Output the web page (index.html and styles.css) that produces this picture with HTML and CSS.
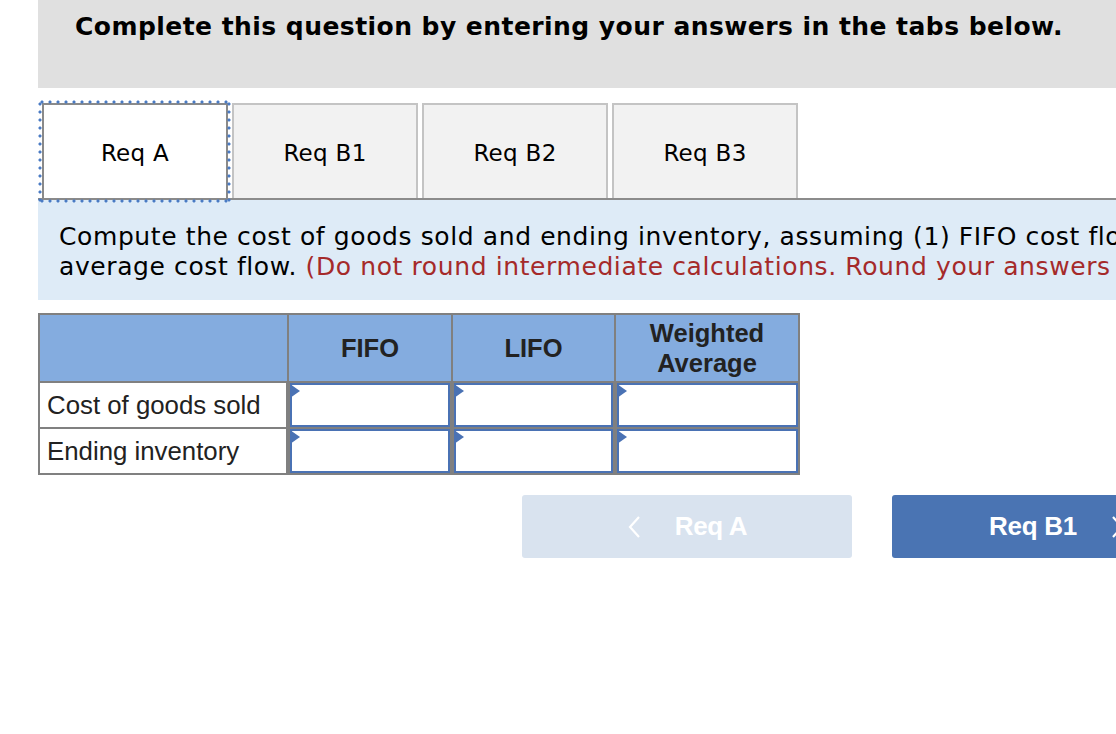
FILE: index.html
```html
<!DOCTYPE html>
<html lang="en">
<head>
<meta charset="utf-8">
<title>Req A</title>
<link rel="stylesheet" href="styles.css">
</head>
<body>
<div class="wrap">
  <div class="header">
    <h2 class="title">Complete this question by entering your answers in the tabs below.</h2>
  </div>

  <div class="tabs">
    <div class="tab active">Req A</div>
    <div class="tab">Req B1</div>
    <div class="tab">Req B2</div>
    <div class="tab">Req B3</div>
  </div>

  <div class="instructions">
    Compute the cost of goods sold and ending inventory, assuming (1) FIFO cost flow, (2) LIFO cost flow, and (3) weighted<br>
    average cost flow. <span class="warn">(Do not round intermediate calculations. Round your answers to the nearest whole dollar.)</span>
  </div>

  <table class="grid">
    <thead>
      <tr>
        <th class="c-label"></th>
        <th class="c-fifo">FIFO</th>
        <th class="c-lifo">LIFO</th>
        <th class="c-wa">Weighted<br>Average</th>
      </tr>
    </thead>
    <tbody>
      <tr>
        <td class="label">Cost of goods sold</td>
        <td class="input"><span class="flag"></span></td>
        <td class="input"><span class="flag"></span></td>
        <td class="input"><span class="flag"></span></td>
      </tr>
      <tr>
        <td class="label">Ending inventory</td>
        <td class="input"><span class="flag"></span></td>
        <td class="input"><span class="flag"></span></td>
        <td class="input"><span class="flag"></span></td>
      </tr>
    </tbody>
  </table>

  <div class="nav">
    <div class="btn prev">
      <svg class="chev" width="14" height="24" viewBox="0 0 14 24"><polyline points="12,2 3,12 12,22" fill="none" stroke="#ffffff" stroke-width="2.2"/></svg>
      <span>Req A</span>
    </div>
    <div class="btn next">
      <span>Req B1</span>
      <svg class="chev" width="14" height="24" viewBox="0 0 14 24"><polyline points="2,2 11,12 2,22" fill="none" stroke="#ffffff" stroke-width="2.2"/></svg>
    </div>
  </div>
</div>
</body>
</html>
```

FILE: styles.css
```css
html, body {
  margin: 0;
  padding: 0;
  background: #ffffff;
  overflow: hidden;
}

.wrap {
  width: 1680px;
  padding-left: 38px;
  font-family: "DejaVu Sans", Verdana, sans-serif;
  color: #000;
}

.header {
  background: #e0e0e0;
  height: 88px;
  box-sizing: border-box;
  padding: 11px 37px 0;
}

.title {
  margin: 0;
  font-size: 25px;
  font-weight: bold;
  line-height: 32px;
  letter-spacing: 0.45px;
}

.tabs {
  display: flex;
  gap: 4px;
  margin-top: 15px;
  padding-left: 4px;
  border-bottom: 2px solid #8c8c8c;
  height: 97px;
  box-sizing: border-box;
}

.tab {
  position: relative;
  width: 186px;
  height: 95px;
  box-sizing: border-box;
  border: 2px solid #c4c4c4;
  border-bottom: none;
  background: #f2f2f2;
  display: flex;
  align-items: center;
  justify-content: center;
  font-size: 23px;
  letter-spacing: 0.3px;
  padding-top: 2px;
}

.tab.active {
  background: #ffffff;
  border: 2px solid #8a8a8a;
  height: 97px;
}

.tab.active::after {
  content: "";
  position: absolute;
  top: -5px;
  left: -6px;
  right: -5px;
  bottom: -5px;
  background:
    radial-gradient(circle, #4a7bc4 1.3px, transparent 1.8px) left top / 8px 4px repeat-x,
    radial-gradient(circle, #4a7bc4 1.3px, transparent 1.8px) left bottom / 8px 4px repeat-x,
    radial-gradient(circle, #4a7bc4 1.3px, transparent 1.8px) left top / 4px 8px repeat-y,
    radial-gradient(circle, #4a7bc4 1.3px, transparent 1.8px) right top / 4px 8px repeat-y;
  pointer-events: none;
}

.instructions {
  background: #deebf7;
  height: 100px;
  box-sizing: border-box;
  padding: 22px 21px 0;
  font-size: 25px;
  line-height: 30px;
  letter-spacing: 0.6px;
  white-space: nowrap;
}

.warn {
  color: #a52a2a;
}

.grid {
  margin-top: 13px;
  border-collapse: collapse;
  font-family: "Liberation Sans", Arial, sans-serif;
  border: 2px solid #808080;
}

.grid th {
  background: #84acdf;
  color: #222;
  font-weight: bold;
  font-size: 25.5px;
  height: 66px;
  line-height: 30px;
  border: 2px solid #808080;
  padding: 0;
  text-align: center;
}

.c-label { width: 247px; }
.c-fifo { width: 162px; }
.c-lifo { width: 161px; }
.c-wa { width: 182px; }

.grid td {
  height: 44px;
  padding: 0;
  border: 2px solid #808080;
}

.grid td.label {
  padding-left: 7px;
  color: #222;
  font-size: 25.8px;
  text-align: left;
}

.grid td.input {
  background: #ffffff;
  box-shadow: inset 0 0 0 2px #4a72b4;
  border-left-width: 4px;
  position: relative;
}

.flag {
  position: absolute;
  left: 0;
  top: 1px;
  width: 0;
  height: 0;
  border-top: 7px solid transparent;
  border-bottom: 7px solid transparent;
  border-left: 10px solid #4a72b4;
}

.nav {
  display: flex;
  gap: 40px;
  margin-top: 20px;
  padding-left: 484px;
}

.btn {
  width: 330px;
  height: 63px;
  border-radius: 3px;
  display: flex;
  align-items: center;
  justify-content: center;
  gap: 34px;
  color: #ffffff;
  font-family: "Liberation Sans", Arial, sans-serif;
  font-weight: bold;
  font-size: 26px;
  letter-spacing: -0.3px;
}

.btn.prev {
  background: #d9e3ef;
}

.btn.next {
  background: #4a74b3;
}

.chev {
  display: block;
}
```
